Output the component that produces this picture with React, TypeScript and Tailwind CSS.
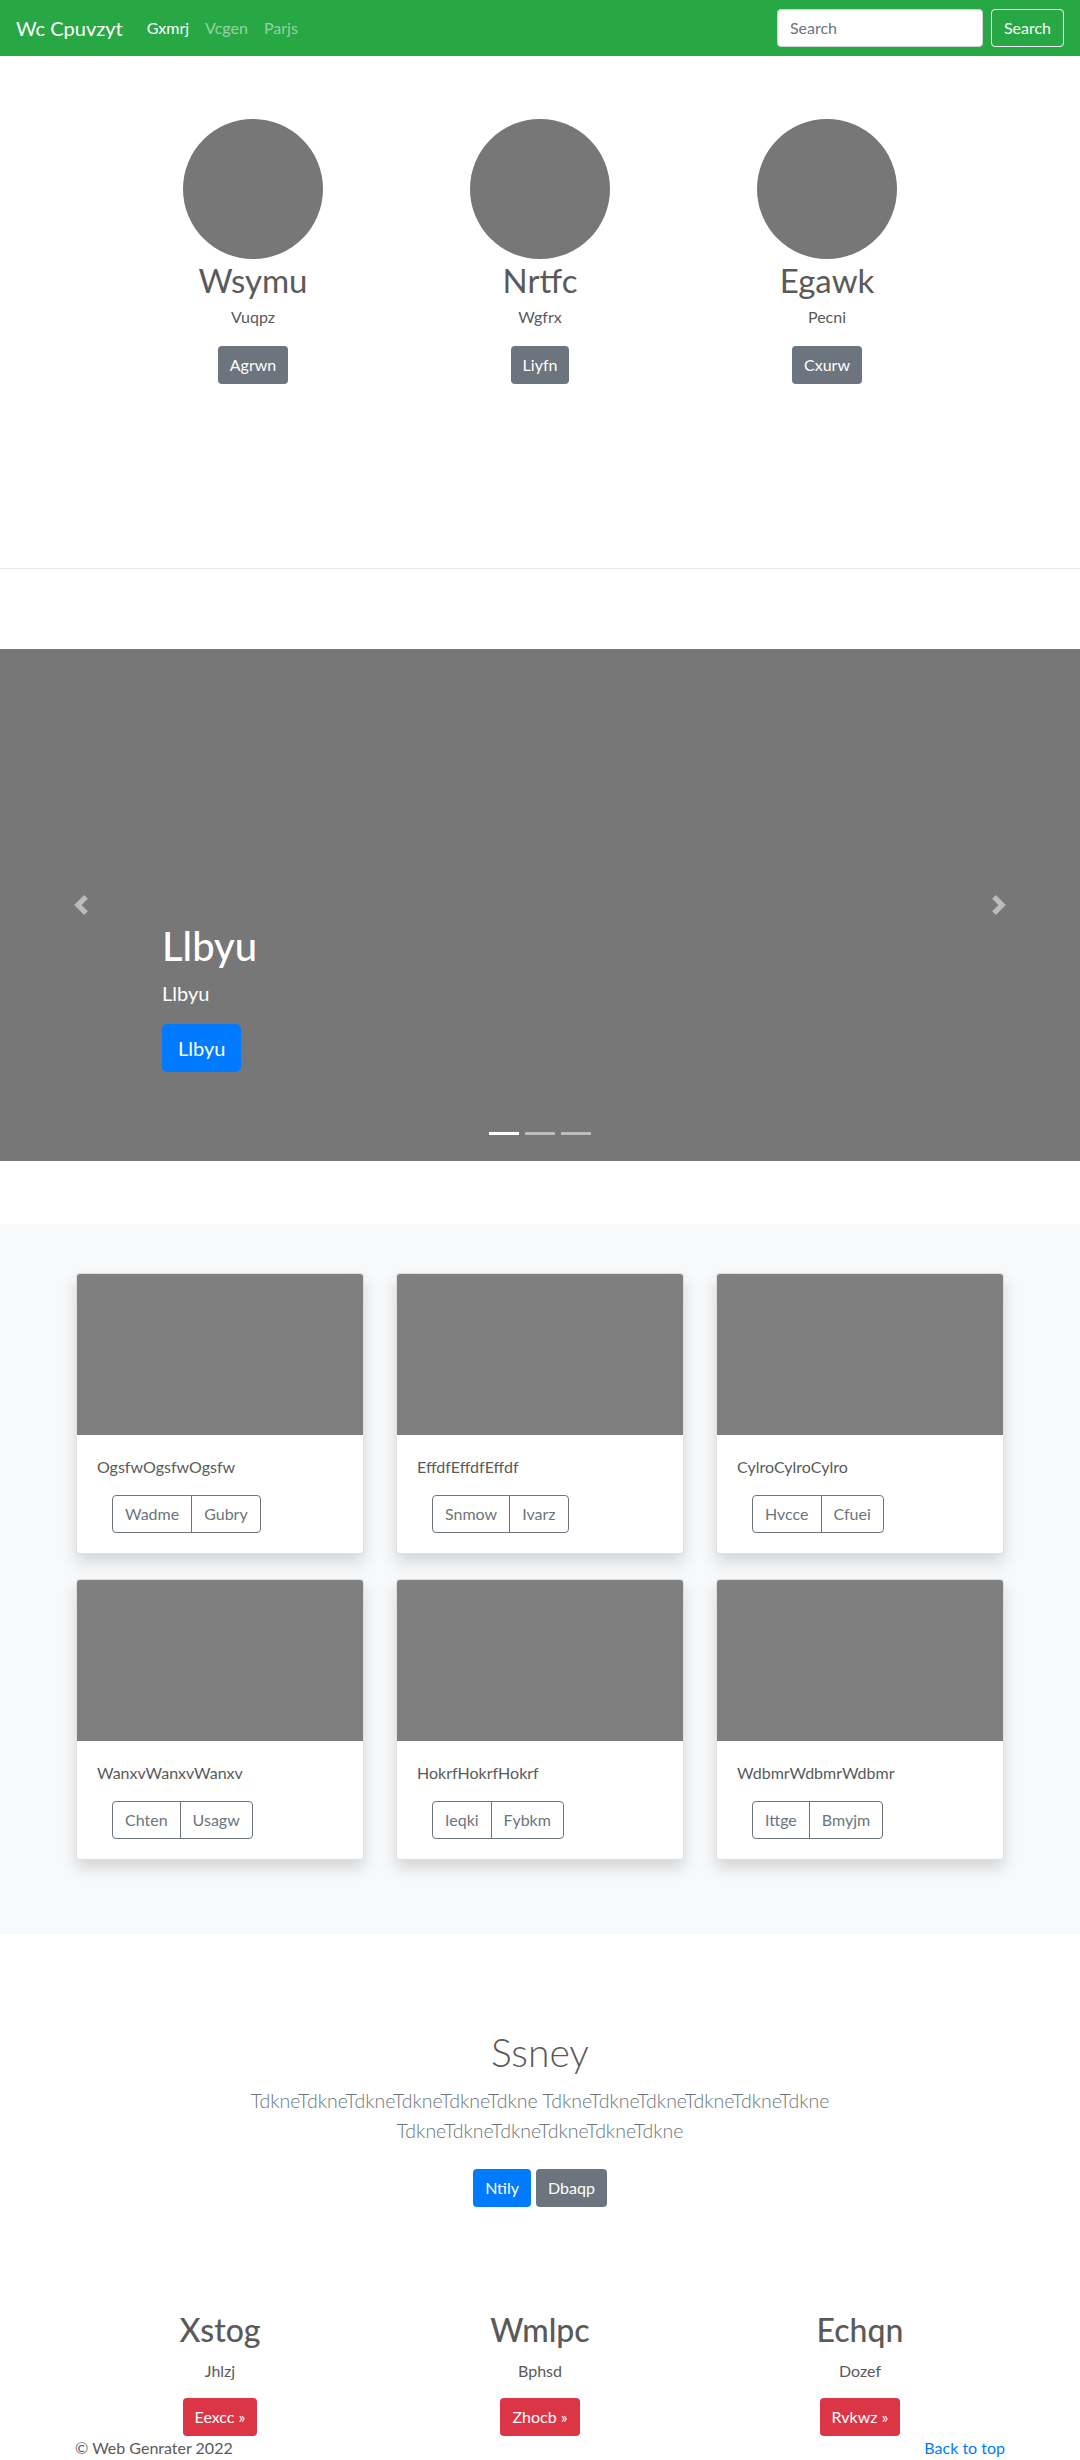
import React from "react";

const people = [
  { name: "Wsymu", sub: "Vuqpz", btn: "Agrwn" },
  { name: "Nrtfc", sub: "Wgfrx", btn: "Liyfn" },
  { name: "Egawk", sub: "Pecni", btn: "Cxurw" },
];

const cards = [
  { t: "OgsfwOgsfwOgsfw", a: "Wadme", b: "Gubry" },
  { t: "EffdfEffdfEffdf", a: "Snmow", b: "Ivarz" },
  { t: "CylroCylroCylro", a: "Hvcce", b: "Cfuei" },
  { t: "WanxvWanxvWanxv", a: "Chten", b: "Usagw" },
  { t: "HokrfHokrfHokrf", a: "Ieqki", b: "Fybkm" },
  { t: "WdbmrWdbmrWdbmr", a: "Ittge", b: "Bmyjm" },
];

const marketing = [
  { h: "Xstog", p: "Jhlzj", b: "Eexcc »" },
  { h: "Wmlpc", p: "Bphsd", b: "Zhocb »" },
  { h: "Echqn", p: "Dozef", b: "Rvkwz »" },
];

export default function App() {
  return (
    <div className="font-['Lato',sans-serif] text-[#5a5a5a] bg-white w-[1080px] h-[2460px] overflow-hidden">
      {/* Navbar */}
      <nav className="h-[56px] bg-[#28a745] flex items-center px-4">
        <span className="text-white text-[20px] leading-[30px] mr-4">Wc Cpuvzyt</span>
        <div className="flex items-center text-[16px] leading-[24px]">
          <span className="px-2 text-white">Gxmrj</span>
          <span className="px-2 text-white/50">Vcgen</span>
          <span className="px-2 text-white/50">Parjs</span>
        </div>
        <div className="ml-auto flex items-center">
          <div className="w-[206px] h-[38px] bg-white rounded-[4px] border border-[#ced4da] px-3 flex items-center text-[16px] text-[#6c757d] mr-2">
            Search
          </div>
          <div className="h-[38px] px-3 flex items-center rounded-[4px] border border-[#f8f9fa] text-[#f8f9fa] text-[16px]">
            Search
          </div>
        </div>
      </nav>

      {/* Marketing circles */}
      <section className="pt-[63px]">
        <div className="w-[861px] mx-auto grid grid-cols-3">
          {people.map((p) => (
            <div key={p.name} className="flex flex-col items-center">
              <div className="w-[140px] h-[140px] rounded-full bg-[#777777]" />
              <h2 className="text-[33px] leading-[42px] font-normal">{p.name}</h2>
              <p className="mt-[4px] text-[16px] leading-[24px]">{p.sub}</p>
              <div className="mt-[17px] h-[38px] px-3 flex items-center rounded-[4px] bg-[#6c757d] text-white text-[16px]">
                {p.btn}
              </div>
            </div>
          ))}
        </div>
      </section>

      <hr className="mt-[184px] border-0 h-px bg-[#e6e6e6]" />

      {/* Carousel */}
      <div className="relative mt-[80px] h-[512px] bg-[#777777]">
        <div className="absolute left-[71px] top-[246px] opacity-50">
          <svg width="20" height="20" viewBox="0 0 8 8" fill="#fff">
            <path d="M5.25 0l-4 4 4 4 1.5-1.5-2.5-2.5 2.5-2.5-1.5-1.5z" />
          </svg>
        </div>
        <div className="absolute left-[989px] top-[246px] opacity-50">
          <svg width="20" height="20" viewBox="0 0 8 8" fill="#fff">
            <path d="M2.75 0l-1.5 1.5 2.5 2.5-2.5 2.5 1.5 1.5 4-4-4-4z" />
          </svg>
        </div>
        <div className="absolute left-[162px] top-[273px] text-white">
          <h1 className="text-[40px] leading-[48px] font-medium">Llbyu</h1>
          <p className="mt-[8px] text-[20px] leading-[30px]">Llbyu</p>
          <div className="mt-[16px] inline-flex h-[48px] px-4 items-center rounded-[5px] bg-[#007bff] text-[20px]">
            Llbyu
          </div>
        </div>
        <div className="absolute left-0 right-0 top-[483px] flex justify-center gap-[6px]">
          <div className="w-[30px] h-[3px] bg-white" />
          <div className="w-[30px] h-[3px] bg-white/50" />
          <div className="w-[30px] h-[3px] bg-white/50" />
        </div>
      </div>

      {/* Album */}
      <section className="mt-[63px] h-[710px] bg-[#f8f9fa] pt-[49px]">
        <div className="w-[928px] mx-auto grid grid-cols-3 gap-x-[32px] gap-y-[25px]">
          {cards.map((c) => (
            <div
              key={c.t}
              className="bg-white rounded-[4px] border border-black/[0.125] overflow-hidden shadow-[0_8px_16px_rgba(0,0,0,0.15)]"
            >
              <div className="h-[161px] bg-[#7f7f7f]" />
              <div className="p-5">
                <p className="text-[16px] leading-[24px] mb-4">{c.t}</p>
                <div className="ml-[15px] flex text-[16px] leading-[24px] text-[#6c757d]">
                  <div className="h-[38px] px-3 flex items-center border border-[#6c757d] rounded-l-[4px]">{c.a}</div>
                  <div className="h-[38px] px-3 flex items-center border border-[#6c757d] -ml-px rounded-r-[4px]">{c.b}</div>
                </div>
              </div>
            </div>
          ))}
        </div>
      </section>

      {/* Jumbotron */}
      <section className="pt-[94px] text-center">
        <div className="w-[610px] mx-auto">
          <h1 className="text-[39px] leading-[48px] font-light">Ssney</h1>
          <p className="mt-[10px] text-[19.5px] leading-[30px] font-light text-[#6c757d]">
            TdkneTdkneTdkneTdkneTdkneTdkne TdkneTdkneTdkneTdkneTdkneTdkne TdkneTdkneTdkneTdkneTdkneTdkne
          </p>
          <div className="mt-[23px] flex justify-center gap-[5px]">
            <div className="h-[38px] px-3 flex items-center rounded-[4px] bg-[#007bff] text-white text-[16px]">Ntily</div>
            <div className="h-[38px] px-3 flex items-center rounded-[4px] bg-[#6c757d] text-white text-[16px]">Dbaqp</div>
          </div>
        </div>
      </section>

      {/* Marketing bottom */}
      <section className="mt-[104px]">
        <div className="w-[960px] mx-auto grid grid-cols-3">
          {marketing.map((m) => (
            <div key={m.h} className="flex flex-col items-center">
              <h2 className="text-[32px] leading-[38px] font-medium">{m.h}</h2>
              <p className="mt-[10px] text-[16px] leading-[24px]">{m.p}</p>
              <div className="mt-[15px] h-[38px] px-3 flex items-center rounded-[4px] bg-[#dc3545] text-white text-[16px]">
                {m.b}
              </div>
            </div>
          ))}
        </div>
      </section>

      {/* Footer */}
      <footer className="w-[930px] mx-auto flex justify-between text-[16px] leading-[24px]">
        <span>© Web Genrater 2022</span>
        <span className="text-[#007bff]">Back to top</span>
      </footer>
    </div>
  );
}
